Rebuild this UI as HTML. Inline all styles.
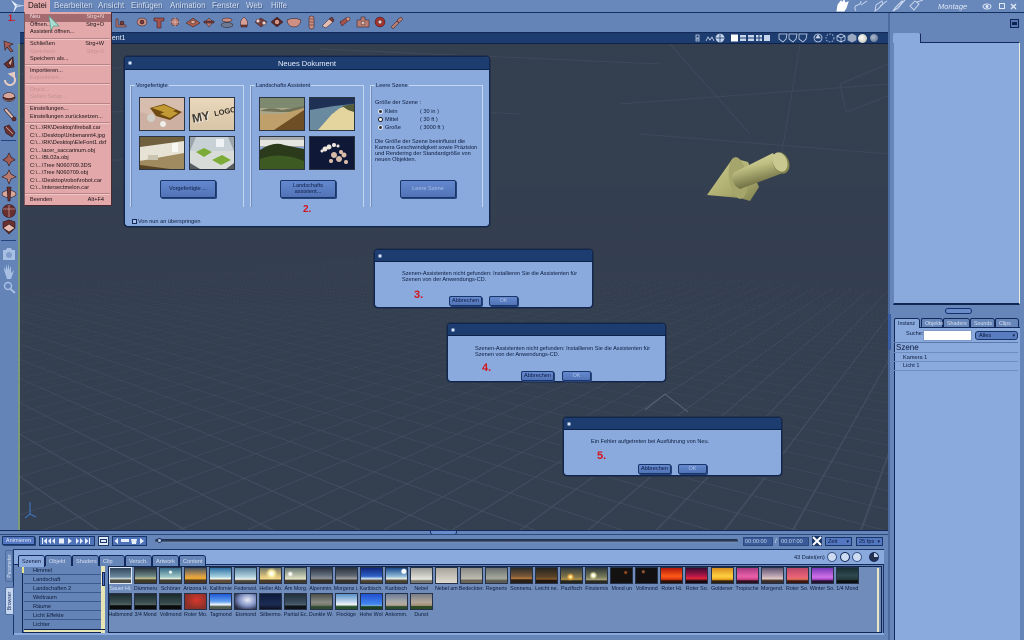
<!DOCTYPE html>
<html lang="de"><head><meta charset="utf-8"><title>Neues Dokument</title>
<style>
*{box-sizing:border-box}
html,body{margin:0;padding:0;width:1024px;height:640px;overflow:hidden;background:#6685b8;font-family:"Liberation Sans",sans-serif;color:#0b1a3a}
#r{position:absolute;left:0;top:0;width:1024px;height:640px;overflow:hidden;filter:blur(.3px)}
.a{position:absolute}
.t{position:absolute;white-space:nowrap;line-height:1}
.mb{font-size:8px;color:#d6e0f1;top:2px;text-shadow:1px 1px 0 rgba(20,40,80,.45)}
.mi{position:absolute;left:30px;font-size:5.6px;white-space:nowrap;line-height:7px;color:#1a1014}
.ms{position:absolute;right:920px;font-size:5.6px;line-height:7px;color:#1a1014}
.dis{color:#c48f92}
.sep{position:absolute;left:25px;width:85px;height:2px;background:#b98487;border-bottom:1px solid #f0c6c6}
.win{position:absolute;background:#8aaade;border:1px solid #10264f;border-radius:4px;box-shadow:0 0 0 1px #26334a}
.tb{position:absolute;left:0;right:0;top:0;height:12px;background:#1d3c70;border-radius:3px 3px 0 0;border-bottom:1px solid #0d2248}
.dot{position:absolute;left:3px;top:4px;width:4px;height:4px;border-radius:50%;background:#fff;border:1px solid #7f9cc8}
.grp{position:absolute;border:1px solid #c5d6f0;border-bottom:0;box-shadow:inset 1px 0 #6f8dbd}
.gl{position:absolute;left:4px;top:-3px;background:#8aaade;padding:0 1px;font-size:5.6px;line-height:6px;white-space:nowrap}
.th{position:absolute;width:46px;height:34px;border:1px solid #2a3444;overflow:hidden}
.th svg{display:block}
.btn{position:absolute;background:linear-gradient(#6488cf,#5273b6);border:1px solid #1a3568;border-radius:2px;color:#0d1d42;font-size:5.6px;text-align:center;display:flex;align-items:center;justify-content:center;line-height:6px;box-shadow:1px 1px 0 #27457d}
.off{color:#a9c1e8}
.num{position:absolute;color:#d4141c;font:bold 10px "Liberation Sans",sans-serif;line-height:1}
.txt{position:absolute;font-size:5.6px;line-height:6px;white-space:nowrap;color:#0b1a3a}
.tab{position:absolute;top:555px;height:11px;background:#6685b8;border:1px solid #12295a;border-bottom:0;border-radius:2px 3px 0 0;font-size:5.6px;color:#d6e0f1;padding:3px 0 0 3px;white-space:nowrap}
.sky{display:flex;position:absolute;left:109px}
.c{width:25.07px;flex:none;text-align:left}
.c i{display:block;width:23px;height:17px;border:1px solid #26314a}
.c b{display:block;font-weight:normal;font-size:5.3px;line-height:6px;margin-top:2px;width:25px;margin-left:-1px;text-align:center;white-space:nowrap;overflow:hidden;color:#0b1a3a}
.cat{position:absolute;left:24px;width:77px;height:9px;border-bottom:1px solid #3c5a8e;font-size:5.6px;padding:2px 0 0 9px;background:#6483b6;color:#0b1a3a}
.rt{position:absolute;top:318px;height:9px;background:#6685b8;border:1px solid #12295a;border-bottom:0;border-radius:2px 3px 0 0;font-size:5.3px;color:#d6e0f1;padding:2px 0 0 3px;white-space:nowrap}
.row{position:absolute;left:894px;width:124px;height:9px;border-bottom:1px solid #6f8dbd;font-size:5.6px;padding:2px 0 0 9px}
</style></head>
<body><div id="r">

<!-- Viewport -->
<div class="a" style="left:18px;top:44px;width:870px;height:486px;background:#343f50;overflow:hidden;border-left:2px solid #7d9a78">
  <div class="a" style="left:-1060px;top:-1100px;width:3000px;height:3000px;transform:perspective(620px) rotateX(68deg) rotateZ(38deg);background-image:linear-gradient(#465164 1px,transparent 1px),linear-gradient(90deg,#465164 1px,transparent 1px);background-size:40px 40px"></div>
  <div class="a" style="left:0;top:0;width:870px;height:260px;background:linear-gradient(#343f50 55%,rgba(52,63,80,0))"></div>
  <svg class="a" style="left:0;top:0" width="870" height="486" fill="none">
    <defs>
      <linearGradient id="cy" x1="0" y1="0" x2=".35" y2="1"><stop offset="0" stop-color="#dcdca6"/><stop offset=".45" stop-color="#c0c084"/><stop offset="1" stop-color="#66663c"/></linearGradient>
      <linearGradient id="co" x1="0" y1="0" x2="1" y2="1"><stop offset="0" stop-color="#cfcf92"/><stop offset=".6" stop-color="#abab6e"/><stop offset="1" stop-color="#80804e"/></linearGradient>
    </defs>
    <g stroke="#3f495b" stroke-width="1">
      <path d="M0 30L250 14M0 75L120 66M290 60L500 70M300 5L640 20M600 60L870 40M620 90L870 110M650 0L730 90M780 0L760 120M0 120L200 112"/>
      <path d="M820 40L868 20M820 40L826 68L868 52"/>
    </g>
    <path d="M625 366L645 350L668 368" stroke="#5a6577"/>
    <path d="M10 470V458M10 470L16 473M10 470L5 474" stroke="#3f78c8"/>
    <!-- 3D object -->
    <g transform="translate(-20,-44)">
      <path d="M707 195L733 158L748 162L759 187L750 201L740 198Z" fill="url(#co)"/>
      <ellipse cx="738" cy="178" rx="9" ry="21" transform="rotate(-8 738 178)" fill="#a6a66c"/>
      <path d="M733 173L773 153L783 173L740 189Q731 185 733 173Z" fill="url(#cy)"/>
      <ellipse cx="781" cy="163" rx="8" ry="11" transform="rotate(-22 781 163)" fill="#86864f"/>
      <ellipse cx="780" cy="162" rx="7" ry="10" transform="rotate(-22 780 162)" fill="#c8c890"/>
    </g>
  </svg>
</div>

<!-- chrome bars -->
<div class="a" style="left:0;top:0;width:1024px;height:13px;background:#6887ba;border-bottom:1px solid #14305f"></div>
<div class="a" style="left:0;top:13px;width:888px;height:20px;background:#6483b6"></div>
<div class="a" style="left:0;top:13px;width:18px;height:517px;background:#6483b6"></div>
<div class="a" style="left:20px;top:32px;width:868px;height:12px;background:#1d3c70;border-top:1px solid #12295a;border-bottom:1px solid #0e2148"></div>
<div class="t" style="left:106px;top:35px;font-size:7px;color:#e6eefa">ment1</div>

<!-- logo -->
<svg class="a" style="left:9px;top:0" width="17" height="13"><path d="M2 0L8 4.500L16 5.500L8 7L4 13L6 6.500Z" fill="#e9f0fa"/><path d="M6 6.500L16 5.500L8 5Z" fill="#9db4d8"/></svg>

<!-- menu bar -->
<div class="a" style="left:24px;top:0;width:26px;height:13px;background:#e3a9aa"></div>
<div class="t mb" style="left:28px;color:#1a1014;text-shadow:none">Datei</div>
<div class="t mb" style="left:54px">Bearbeiten</div>
<div class="t mb" style="left:98px">Ansicht</div>
<div class="t mb" style="left:131px">Einfügen</div>
<div class="t mb" style="left:170px">Animation</div>
<div class="t mb" style="left:212px">Fenster</div>
<div class="t mb" style="left:246px">Web</div>
<div class="t mb" style="left:271px">Hilfe</div>

<!-- top-right modes -->
<svg class="a" style="left:835px;top:0" width="90" height="12" fill="none" stroke="#c7d5ec" stroke-width="1">
  <path d="M2 11L3 5L6 1L7 3L9 0L10 3L13 2L11 8L9 11Z" fill="#fff" stroke="#fff"/>
  <path d="M21 11Q18 6 23 5Q26 4 26 1M26 5L32 1"/>
  <path d="M40 11L41 5L47 1L48 4L43 9ZM45 6L52 1"/>
  <path d="M58 11L61 7L67 1L68 2L63 8ZM66 4L70 0" stroke-width="1.3"/>
  <path d="M75 6L80 1L84 4L79 10ZM82 2L88 0"/>
</svg>
<div class="t" style="left:938px;top:2px;font:italic 7.5px 'Liberation Sans',sans-serif;color:#dfe8f6">Montage</div>
<svg class="a" style="left:982px;top:2px" width="38" height="9" fill="none" stroke="#dfe8f6">
  <ellipse cx="5" cy="4.5" rx="4" ry="2.5"/><circle cx="5" cy="4.5" r="1" fill="#fff"/>
  <rect x="17.5" y="1.5" width="5" height="5"/><path d="M29 2L34 7M34 2L29 7" stroke-width="1.4"/>
</svg>
<div class="num" style="left:8px;top:14px;font-size:9px">1.</div>

<!-- top toolbar icons -->
<svg class="a" style="left:110px;top:14px" width="300" height="17">
<g fill="#7a3d3c" stroke="#2e181b" stroke-width=".5">
  <path d="M8 5V11H16V13H6V5Z" fill="#b87c72"/><circle cx="12" cy="9" r="2" fill="#7a3d3c"/>
  <ellipse cx="32" cy="8" rx="5" ry="4" fill="#c88e82"/><circle cx="32" cy="8" r="2"/>
  <path d="M44 4H54V7H51V14H47V7H44Z" fill="#a4524c"/>
  <circle cx="65" cy="8" r="4" fill="#b87c72"/><path d="M60 8H70M65 3V13" stroke="#f0d8d0"/>
  <path d="M76 9L83 4L90 9L83 13Z" fill="#a9604f"/><path d="M80 8L83 6L86 8L83 10Z" fill="#e0aa9a"/>
  <path d="M99 4L103 8L99 13L95 8Z" fill="#b87c72"/><path d="M94 7H104V9H94Z"/>
  <ellipse cx="117" cy="6" rx="5" ry="2" fill="#c88e82"/><ellipse cx="117" cy="11" rx="6" ry="2.5" fill="#6a7a92"/>
  <path d="M131 12Q129 7 134 3Q139 7 137 12Z" fill="#d8a094"/><rect x="131" y="11" width="6" height="2" fill="#7a3d3c"/>
  <path d="M145 8L151 4L157 8L151 13Z"/><circle cx="148" cy="7" r="2" fill="#f0d0c8"/><circle cx="154" cy="9" r="2" fill="#f0d0c8"/>
  <path d="M161 8L167 3L173 8L167 13Z" fill="#5c2a2a"/><circle cx="167" cy="8" r="2.5" fill="#d89888"/>
  <path d="M177 6Q184 3 191 6Q190 13 184 13Q178 13 177 6Z" fill="#cf9084"/>
  <rect x="199" y="2" width="5" height="13" rx="2" fill="#c88e82"/><path d="M199 5H204M199 8H204M199 11H204" stroke="#4a2224"/>
  <path d="M212 12L219 5L223 8L216 14Z" fill="#e0bcb2"/><path d="M219 5L222 3L224 6L223 8Z"/>
  <path d="M230 8L236 4L238 7L232 12Z" fill="#a4524c"/><circle cx="238" cy="5" r="2" fill="#d89888"/>
  <path d="M247 13V6H251V3H255V6H259V13Z" fill="#b87c72"/><circle cx="253" cy="9" r="2" fill="#e0bcb2"/>
  <circle cx="270" cy="8" r="5" fill="#a5322e"/><circle cx="270" cy="8" r="2" fill="#f0d0c8"/>
  <path d="M281 13L287 7L289 9L283 15ZM287 6L291 3L293 5L289 9Z" fill="#b87c72"/>
</g></svg>

<!-- left toolbar icons -->
<svg class="a" style="left:0;top:38px" width="18" height="260">
<g stroke="#2e181b" stroke-width=".6" fill="#b87c72">
  <path d="M4 3L13 6L9 8L13 13L11 14L7 9L5 12Z" fill="#a35c54"/>
  <path d="M4 26L13 19L14 29L8 30Z" fill="#6a3030"/><path d="M8 25L13 19L11 28Z" fill="#d8a69a"/>
  <path d="M5 42A5 5 0 1 0 13 38L10 36L14 35V39" fill="none" stroke="#e8ccc4" stroke-width="2"/>
  <ellipse cx="9" cy="59" rx="6" ry="4.500" fill="#d8a69a"/><path d="M3 59Q9 66 15 59Q9 62 3 59Z" fill="#6a3030"/>
  <path d="M4 72L6 70L15 80L13 82Z" fill="#e0bcb2"/><circle cx="14" cy="81" r="2" fill="#6a3030"/>
  <path d="M4 89L9 87L15 95L12 99L6 95Z" fill="#6a3030"/><path d="M6 89L13 96" stroke="#e0bcb2" fill="none"/>
  <path d="M9 115L11 119L15 122L11 124L9 128L7 124L3 122L7 119Z" fill="#a35c54"/>
  <path d="M9 132L11 136L16 139L11 141L9 146L7 141L2 139L7 136Z" fill="#b87c72"/>
  <ellipse cx="9" cy="156" rx="7" ry="3.500" fill="#d8a69a"/><path d="M7 149H11L10 163H8Z" fill="#6a3030"/>
  <circle cx="9" cy="173" r="6.500" fill="#6a3030"/><path d="M3 171H15M9 167V179" stroke="#e0bcb2"/>
  <path d="M3 184L9 182L15 184V190L9 196L3 190Z" fill="#6a3030"/><path d="M3 190L9 186L15 190L9 194Z" fill="#e6baae"/>
</g>
<rect x="1" y="102" width="15" height="1" fill="#23457e"/><rect x="1" y="202" width="15" height="1" fill="#23457e"/>
<g fill="#a6bfe3">
  <path d="M3 212H6L7 210H11L12 212H15V222H3Z"/><circle cx="9" cy="217" r="3" fill="#7f9ccb"/>
  <path d="M4 232L5 228V233L7 226V232L9 226V232L11 228V235L14 232L11 241H7Z"/>
</g>
<circle cx="8" cy="248" r="3.500" fill="none" stroke="#a6bfe3" stroke-width="1.500"/><path d="M10.500 251L15 255" stroke="#a6bfe3" stroke-width="2"/>
</svg>

<!-- doc title icons -->
<svg class="a" style="left:690px;top:32px" width="196" height="12" fill="none" stroke="#c7d5ec" stroke-width=".8">
  <path d="M6 3H9V6H6ZM6 7H9V9H6Z"/><path d="M16 9L18 5L20 8L22 5L24 9"/>
  <circle cx="30" cy="6" r="4" fill="#c7d5ec"/><path d="M26 6H34M30 2V10" stroke="#1d3c70"/>
  <rect x="41" y="2.500" width="7" height="7" fill="#fff" stroke="none"/>
  <g fill="#c7d5ec" stroke="none"><rect x="50" y="3" width="6" height="2.500"/><rect x="50" y="6.500" width="6" height="2.500"/><rect x="58" y="3" width="6" height="2.500"/><rect x="58" y="6.500" width="6" height="2.500"/><rect x="66" y="3" width="2.500" height="2.500"/><rect x="69.500" y="3" width="2.500" height="2.500"/><rect x="66" y="6.500" width="2.500" height="2.500"/><rect x="69.500" y="6.500" width="2.500" height="2.500"/><rect x="74" y="3" width="6" height="6"/></g>
  <path d="M89 2H97L96 7L93 10L89 7Z M99 2H107L106 7L103 10L99 7Z M109 2H117L116 7L113 10L109 7Z"/>
  <circle cx="128" cy="6" r="4"/><path d="M128 3L130 6H126Z" fill="#c7d5ec"/>
  <circle cx="140" cy="6" r="4" stroke-dasharray="1.500 1.500"/>
  <path d="M151 2L155 4V8L151 10L147 8V4Z M147 4L151 6L155 4M151 6V10"/>
  <path d="M162 2L166 4V8L162 10L158 8V4Z" fill="#9aa9bf" stroke="#9aa9bf"/>
</svg>
<div class="a" style="left:858px;top:34px;width:9px;height:9px;border-radius:50%;background:radial-gradient(circle at 40% 40%,#fff,#b9b9a6)"></div>
<div class="a" style="left:870px;top:34px;width:8px;height:8px;border-radius:50%;background:radial-gradient(circle at 40% 40%,#aebccf,#55678a)"></div>

<!-- Right panel -->
<div class="a" style="left:888px;top:13px;width:136px;height:627px;background:#6685b8;border-left:2px solid #4e6b9d"></div>
<div class="a" style="left:1010px;top:19px;width:9px;height:9px;background:#5677b6;border:1px solid #0f2450"><div class="a" style="left:1px;top:2px;width:5px;height:3px;background:#0f2450"></div></div>
<div class="a" style="left:893px;top:42px;width:127px;height:263px;background:#8aaade;border-left:1px solid #6685b8;border-right:1px solid #e6ecd8;border-bottom:2px solid #10264f;border-top:1px solid #12295a"></div>
<div class="a" style="left:893px;top:33px;width:28px;height:10px;background:#8aaade;border-right:1px solid #12295a;border-radius:2px 2px 0 0"></div>
<div class="a" style="left:945px;top:308px;width:27px;height:6px;background:#6a8bca;border:1px solid #13306a;border-radius:3px"></div>
<div class="a" style="left:888px;top:314px;width:3px;height:36px;background:#3a5ea6"></div>

<div class="rt" style="left:894px;width:26px;background:#8aaade;color:#0b1a3a;height:10px;z-index:2">Instanz</div>
<div class="rt" style="left:921px;width:22px">Objekte</div>
<div class="rt" style="left:943px;width:27px">Shaders</div>
<div class="rt" style="left:970px;width:25px">Sounds</div>
<div class="rt" style="left:995px;width:24px">Clips</div>
<div class="a" style="left:894px;top:327px;width:126px;height:313px;background:#8aaade;border-left:1px solid #12295a;border-top:1px solid #12295a"></div>
<div class="t" style="left:906px;top:332px;font-size:5.6px">Suche:</div>
<div class="a" style="left:923px;top:330px;width:49px;height:11px;background:#fff;border:1px solid #7d9ac8"></div>
<div class="a" style="left:975px;top:331px;width:43px;height:9px;background:#5a7cc0;border:1px solid #1a3568;border-radius:3px;font-size:5.6px;padding:1px 0 0 3px;color:#0b1a3a">Alles<span style="position:absolute;right:2px;top:1px;font-size:5px">▾</span></div>
<div class="a" style="left:894px;top:342px;width:124px;height:1px;background:#5b79ab"></div>
<div class="t" style="left:896px;top:344px;font-size:8px">Szene</div>
<div class="row" style="top:352px;border-top:1px solid #6f8dbd;height:10px">Kamera 1</div>
<div class="row" style="top:361px;height:10px">Licht 1</div>

<!-- Bottom -->
<div class="a" style="left:0;top:530px;width:888px;height:110px;background:#6685b8;border-top:1px solid #12295a"></div>
<div class="a" style="left:430px;top:530px;width:27px;height:5px;background:#6a8bca;border:1px solid #13306a;border-radius:0 0 3px 3px"></div>
<div class="a" style="left:0;top:534px;width:888px;height:1px;background:#2c4a7d"></div>
<div class="btn" style="left:2px;top:536px;width:33px;height:9px;color:#e0e9f7;background:#5377c0;border-radius:1px">Animieren</div>
<svg class="a" style="left:39px;top:536px" width="110" height="10">
  <rect x=".5" y=".5" width="55" height="9" fill="#4f73b8" stroke="#1a3568"/>
  <g fill="#e6eefa">
    <path d="M3 2H4V8H3ZM8 2V8L4.500 5ZM12 2V8L9 5ZM16 2V8L13 5Z"/>
    <rect x="20" y="2.500" width="5" height="5"/>
    <path d="M29 2L33 5L29 8ZM37 2L40 5L37 8ZM41 2L44 5L41 8ZM46 2L49.500 5L46 8ZM50 2H51V8H50Z"/>
  </g>
  <rect x="59.500" y=".5" width="10" height="9" fill="#dfe8f6" stroke="#1a3568"/><rect x="61" y="3" width="7" height="4" fill="#1a3568"/><rect x="62" y="4" width="5" height="2" fill="#dfe8f6"/>
  <rect x="73.500" y=".5" width="34" height="9" fill="#4f73b8" stroke="#1a3568"/>
  <g fill="#e6eefa"><path d="M79 2V8L75.500 5Z"/><rect x="82" y="3" width="8" height="3"/><path d="M92 3H98L97 8H93Z"/><path d="M101 2L105 5L101 8Z"/></g>
</svg>
<div class="a" style="left:155px;top:539px;width:583px;height:4px;background:linear-gradient(#1f2c45,#2c3f62 50%,#8ea7cf);border-radius:2px"></div>
<div class="a" style="left:157px;top:538px;width:5px;height:5px;border-radius:50%;background:#b7c6dc;border:1px solid #1a3568"></div>
<div class="a" style="left:743px;top:537px;width:30px;height:9px;background:#385a98;border:1px solid #2c4a80;color:#c7d5ec;font-size:5.6px;padding:1px 0 0 1px">00:00:00</div>
<div class="t" style="left:775px;top:539px;font-size:6px;color:#dfe8f6">/</div>
<div class="a" style="left:779px;top:537px;width:30px;height:9px;background:#385a98;border:1px solid #2c4a80;color:#c7d5ec;font-size:5.6px;padding:1px 0 0 1px">00:07:00</div>
<svg class="a" style="left:812px;top:536px" width="10" height="10"><rect width="10" height="10" fill="#1a3568"/><path d="M1 1L9 9M9 1L1 9" stroke="#fff" stroke-width="2"/></svg>
<div class="a" style="left:825px;top:537px;width:27px;height:9px;background:#5377c0;border:1px solid #1a3568;font-size:5.6px;padding:1px 0 0 2px;color:#0b1a3a">Zeit<span style="position:absolute;right:2px;top:1px;font-size:5px">▾</span></div>
<div class="a" style="left:856px;top:537px;width:27px;height:9px;background:#5377c0;border:1px solid #1a3568;font-size:5.6px;padding:1px 0 0 2px;color:#0b1a3a">25 fps<span style="position:absolute;right:2px;top:1px;font-size:5px">▾</span></div>

<!-- browser panel -->
<div class="a" style="left:13px;top:549px;width:871px;height:86px;background:#6685b8;border:1px solid #1a3568"></div>
<div class="a" style="left:14px;top:550px;width:870px;height:15px;background:#8aaade;border-bottom:1px solid #12295a"></div>
<div class="a" style="left:14px;top:633px;width:870px;height:2px;background:#8aaade"></div>
<div class="a" style="left:5px;top:550px;width:8px;height:32px;background:#6685b8;border:1px solid #4e6b9d;border-radius:2px 0 0 2px;overflow:hidden"><div class="a" style="left:-12px;top:12px;width:32px;font-size:5px;color:#dfe8f6;transform:rotate(-90deg);text-align:center">Parameter</div></div>
<div class="a" style="left:5px;top:587px;width:9px;height:28px;background:#c5d6f0;border:1px solid #4e6b9d;border-radius:2px 0 0 2px;overflow:hidden"><div class="a" style="left:-10px;top:10px;width:28px;font-size:5px;color:#12295a;transform:rotate(-90deg);text-align:center">Browser</div></div>

<div class="tab" style="left:18px;width:27px;background:#8aaade;color:#0b1a3a;height:12px;z-index:2">Szenen</div>
<div class="tab" style="left:45px;width:27px">Objekt</div>
<div class="tab" style="left:72px;width:27px">Shaders</div>
<div class="tab" style="left:99px;width:26px">Clip</div>
<div class="tab" style="left:125px;width:27px">Versch.</div>
<div class="tab" style="left:152px;width:27px">Artwork</div>
<div class="tab" style="left:179px;width:27px">Content</div>
<div class="t" style="left:794px;top:556px;font-size:5.6px">43 Datei(en)</div>
<div class="a" style="left:827px;top:552px;width:10px;height:10px;border-radius:50%;background:#cddcf2;border:1px solid #3a5488"></div>
<div class="a" style="left:840px;top:552px;width:10px;height:10px;border-radius:50%;background:#cddcf2;border:1px solid #12295a"></div>
<div class="a" style="left:852px;top:552px;width:10px;height:10px;border-radius:50%;background:#cddcf2;border:1px solid #3a5488"></div>
<div class="a" style="left:869px;top:552px;width:10px;height:10px;border-radius:50%;background:conic-gradient(#c7d5ec 0 25%,#24324f 25% 100%);border:1px solid #12295a"></div>

<div class="a" style="left:22px;top:566px;width:83px;height:67px;background:#6483b6;border:1px solid #10264f;border-top:0"></div>
<div class="a" style="left:22px;top:566px;width:2px;height:7px;background:#e6e28a"></div>
<div class="a" style="left:101px;top:566px;width:4px;height:67px;background:#e8e6b4"></div>
<div class="a" style="left:102px;top:572px;width:3px;height:14px;background:#4f73c8;border:1px solid #12295a"></div>
<div class="cat" style="top:566px">Himmel</div>
<div class="cat" style="top:575px">Landschaft</div>
<div class="cat" style="top:584px">Landschaften 2</div>
<div class="cat" style="top:593px">Weltraum</div>
<div class="cat" style="top:602px">Räume</div>
<div class="cat" style="top:611px">Licht Effekte</div>
<div class="cat" style="top:620px;border-bottom:0">Lichter</div>
<div class="a" style="left:24px;top:629px;width:81px;height:3px;background:#e8e6b4;border-top:1px solid #10264f"></div>
<div class="a" style="left:108px;top:566px;width:774px;height:67px;background:#6f8cbb;border:1px solid #10264f"></div>
<div class="a" style="left:877px;top:568px;width:2px;height:64px;background:#e8e6c4"></div>

<!-- Sky row 1 -->
<div class="sky" style="top:567px">
<div class="c"><i style="background:linear-gradient(#31465c,#6d8aa0 60%,#d8e0dc 72%,#4e4f46 80%);border-color:#dfe8f6"></i><b style="color:#cfe0f6">Sauer Hi.</b></div>
<div class="c"><i style="background:linear-gradient(#25323c,#6f8886 55%,#c7c28f 70%,#3f3a28 80%)"></i><b>Dämmeru</b></div>
<div class="c"><i style="background:radial-gradient(circle at 50% 28%,#fff 0 1px,transparent 2px),linear-gradient(#386a88,#9fc8c8 60%,#ecf0e0 72%,#3f3e30 80%)"></i><b>Schöner</b></div>
<div class="c"><i style="background:linear-gradient(#47535e,#d19a4a 50%,#f4b030 70%,#4a3420 82%)"></i><b>Arizona H.</b></div>
<div class="c"><i style="background:linear-gradient(#2e6fa4,#a9d4e2 60%,#fafaf0 72%,#5d4b38 82%)"></i><b>Kalifornie</b></div>
<div class="c"><i style="background:linear-gradient(#5b84a0,#b4d6e2 60%,#f2f2ea 75%,#4a4436 84%)"></i><b>Federwol.</b></div>
<div class="c"><i style="background:radial-gradient(circle at 55% 38%,#fff 0 1px,#f7eba0 3px,transparent 6px),linear-gradient(#72786a,#e6c87c 60%,#f0d78c 72%,#4a3a28 82%)"></i><b>Heller Ab.</b></div>
<div class="c"><i style="background:radial-gradient(circle at 25% 40%,#fff 0 1px,transparent 3px),linear-gradient(#6c7a78,#d4d8bc 65%,#e8e4c8 74%,#3d3a2c 82%)"></i><b>Am Morg.</b></div>
<div class="c"><i style="background:linear-gradient(#2c3340,#5e6a78 45%,#8e9298 70%,#343028 82%)"></i><b>Alpenmin.</b></div>
<div class="c"><i style="background:linear-gradient(#2c3340,#5e6672 50%,#a0a0a0 72%,#33312a 82%)"></i><b>Morgens i.</b></div>
<div class="c"><i style="background:linear-gradient(#10267a,#2f62c8 55%,#cfe4f4 72%,#4a4030 84%)"></i><b>Karibisch.</b></div>
<div class="c"><i style="background:radial-gradient(circle at 85% 22%,#fff 0 2px,transparent 3px),linear-gradient(#1a4a8a,#8fb8d6 55%,#e8eee4 72%,#47402e 84%)"></i><b>Karibisch</b></div>
<div class="c"><i style="background:linear-gradient(#9b9c98,#d8d8d0 60%,#e8e8e0 75%,#77756a 85%)"></i><b>Nebel</b></div>
<div class="c"><i style="background:linear-gradient(#a8a49c,#d0ccc2 70%,#dcd8ce)"></i><b>Nebel am</b></div>
<div class="c"><i style="background:linear-gradient(#8b8a86,#c0beb2 75%,#6b6558 78%)"></i><b>Bedeckter.</b></div>
<div class="c"><i style="background:linear-gradient(#6a6e6e,#a8ac9e 70%,#5b5a50 85%)"></i><b>Regneris</b></div>
<div class="c"><i style="background:linear-gradient(#2c2c28,#7a5a3a 55%,#b87838 72%,#2a2018 78%)"></i><b>Sonnenu.</b></div>
<div class="c"><i style="background:linear-gradient(#26241e,#5c4428 60%,#8c5c2c 75%,#201810 80%)"></i><b>Leicht ne.</b></div>
<div class="c"><i style="background:radial-gradient(circle at 45% 60%,#fff0a0 0 1px,#e8a840 2px,transparent 4px),linear-gradient(#323c3c,#8a7c4c 65%,#b89848 75%,#26261c 86%)"></i><b>Pazifisch</b></div>
<div class="c"><i style="background:radial-gradient(circle at 35% 50%,#fff 0 1px,#e8e4a8 2px,transparent 4px),linear-gradient(#2e3638,#7a7c5c 60%,#a8a27c 78%,#2a2a20 86%)"></i><b>Finsternis</b></div>
<div class="c"><i style="background:radial-gradient(circle at 70% 30%,#9a4a20 0 1px,transparent 2px),#141210"></i><b>Mond un</b></div>
<div class="c"><i style="background:radial-gradient(circle at 35% 25%,#9a5a30 0 1px,transparent 2px),#121010"></i><b>Vollmond</b></div>
<div class="c"><i style="background:linear-gradient(#b01808,#ff5a18 55%,#e03810 75%,#2a1008 86%)"></i><b>Roter Hi.</b></div>
<div class="c"><i style="background:linear-gradient(#3a0a30,#b81848 55%,#e82a3a 70%,#1a0810 86%)"></i><b>Roter So.</b></div>
<div class="c"><i style="background:linear-gradient(#d88c20,#ffd040 55%,#f4a820 76%,#30200c 86%)"></i><b>Goldener</b></div>
<div class="c"><i style="background:linear-gradient(#a83a80,#e860a8 55%,#d84890 75%,#301020 86%)"></i><b>Tropische</b></div>
<div class="c"><i style="background:linear-gradient(#605470,#b8a0b0 50%,#e0c8c0 72%,#3a2c28 84%)"></i><b>Morgend.</b></div>
<div class="c"><i style="background:linear-gradient(#b84868,#e86078 55%,#e87060 75%,#3a1810 86%)"></i><b>Roter So.</b></div>
<div class="c"><i style="background:linear-gradient(#7838b8,#d070e8 60%,#b050d0 75%,#281030 86%)"></i><b>Winter So.</b></div>
<div class="c"><i style="background:linear-gradient(#182c30,#2e4a50 50%,#223838 78%,#0c1010 84%)"></i><b>1/4 Mond</b></div>
</div>

<!-- Sky row 2 -->
<div class="sky" style="top:593px">
<div class="c"><i style="background:linear-gradient(#1c2a30,#3e5254 60%,#5a6a68 70%,#0a0c0c 78%)"></i><b>Halbmond</b></div>
<div class="c"><i style="background:linear-gradient(#1c2a30,#3e5254 60%,#5a6a68 70%,#0a0c0c 78%)"></i><b>3/4 Mond</b></div>
<div class="c"><i style="background:linear-gradient(#1a2a2c,#364a4c 60%,#506060 70%,#0a0c0c 78%)"></i><b>Vollmond</b></div>
<div class="c"><i style="background:radial-gradient(ellipse at 55% 40%,#d8382c,#8a3028 70%),linear-gradient(#333,#111)"></i><b>Roter Mo.</b></div>
<div class="c"><i style="background:linear-gradient(#2058d8,#60a0f0 50%,#f4f8fc 72%,#505c50 84%)"></i><b>Tagmond</b></div>
<div class="c"><i style="background:radial-gradient(ellipse at 60% 40%,#e8ecf8,#7c8cc0 50%,#262a40 85%),#222"></i><b>Eismond</b></div>
<div class="c"><i style="background:linear-gradient(#0c1a3c,#1c2c54 70%,#0c1020)"></i><b>Silbermo.</b></div>
<div class="c"><i style="background:linear-gradient(#22303a,#3c5060 60%,#506070 72%,#0e1418 80%)"></i><b>Partial Ec.</b></div>
<div class="c"><i style="background:linear-gradient(#4a4e4a,#8a8c84 55%,#74786c 75%,#2e4a30 84%)"></i><b>Dunkle W.</b></div>
<div class="c"><i style="background:linear-gradient(#5a90c8,#c8dcf0 55%,#f2f4f4 72%,#24502c 84%)"></i><b>Flockige</b></div>
<div class="c"><i style="background:linear-gradient(#2050d0,#4488f0 70%,#8abcf4 76%,#184020 84%)"></i><b>Hohe Wol</b></div>
<div class="c"><i style="background:linear-gradient(#6c7c98,#a8a8a8 50%,#b8a898 75%,#2a4a2c 84%)"></i><b>Ankomm.</b></div>
<div class="c"><i style="background:linear-gradient(#7a7c88,#b4a898 55%,#a08c74 78%,#2c4a24 82%)"></i><b>Dunst</b></div>
</div>

<!-- Neues Dokument -->
<div class="win" style="left:124px;top:56px;width:366px;height:171px">
  <div class="tb" style="height:13px"><div class="dot"></div></div>
  <div class="t" style="left:0;right:0;top:3px;text-align:center;font-size:7.5px;color:#e6eefa">Neues Dokument</div>
</div>
<div class="grp" style="left:130px;top:85px;width:114px;height:122px"><div class="gl">Vorgefertigte</div></div>
<div class="grp" style="left:250px;top:85px;width:114px;height:122px"><div class="gl">Landschafts Assistent</div></div>
<div class="grp" style="left:370px;top:85px;width:113px;height:122px"><div class="gl">Leere Szene</div></div>

<div class="th" style="left:139px;top:97px"><svg width="44" height="32"><rect width="44" height="32" fill="#cdb0a2"/><path d="M0 0H44V12L30 22L0 14Z" fill="#d6bdae"/><path d="M10 10L24 6L42 14L30 22L16 18Z" fill="#6e4a12"/><path d="M12 10L24 7L36 12L26 15ZM20 16L30 12L38 15L30 20Z" fill="#c29a34"/><circle cx="11" cy="20" r="4" fill="#cfcfc8"/><circle cx="23" cy="26" r="3" fill="#eeeeea"/></svg></div>
<div class="th" style="left:189px;top:97px;background:linear-gradient(#ead8bc,#d8c4a6)"><div class="t" style="left:2px;top:12px;font:bold 12px 'Liberation Sans',sans-serif;color:#3e3a34;letter-spacing:-.3px;transform:rotate(-12deg);text-shadow:1px 1px #efeadf">MY</div><div class="t" style="left:24px;top:9px;font:bold 7.5px 'Liberation Sans',sans-serif;color:#2e2a24;transform:rotate(-12deg)">LOGO</div></div>
<div class="th" style="left:139px;top:136px"><svg width="44" height="32"><rect width="44" height="32" fill="#70603e"/><path d="M0 10L44 4V18L0 24Z" fill="#e6e2d4"/><path d="M0 24L44 16V32H0Z" fill="#a08a60"/><rect x="32" y="6" width="6" height="9" fill="#f8f8f4"/><path d="M8 18H18V23H8Z" fill="#c8c4b0"/><path d="M0 28L30 32H0Z" fill="#5a4426"/></svg></div>
<div class="th" style="left:189px;top:136px"><svg width="44" height="32"><rect width="44" height="32" fill="#9aa6ac"/><path d="M6 0H38L44 14H0Z" fill="#c8d2d6"/><path d="M0 14H44V32H0Z" fill="#d8dcd8"/><rect x="26" y="2" width="8" height="8" fill="#eef2f4"/><path d="M6 15L14 11L22 15L14 20Z" fill="#7cac38"/><path d="M22 23L32 18L41 23L31 28Z" fill="#7cac38"/><path d="M0 26L10 32H0ZM44 26L36 32H44Z" fill="#565e60"/></svg></div>
<div class="th" style="left:259px;top:97px"><svg width="44" height="32"><rect width="44" height="32" fill="#aba788"/><rect width="44" height="10" fill="#7e8a70"/><path d="M0 13Q10 8 22 12L44 8V14L20 14Z" fill="#6f7258"/><path d="M0 16H22L44 10V32H0Z" fill="#bfa06a"/><path d="M14 32L44 12V32Z" fill="#6e4e24"/></svg></div>
<div class="th" style="left:309px;top:97px"><svg width="44" height="32"><rect width="44" height="32" fill="#2a4268"/><path d="M0 0H44V5L20 9L0 12Z" fill="#1e3054"/><path d="M0 12L24 8L44 6V14L24 14L10 32H0Z" fill="#6a8aa0"/><path d="M30 10L44 6V32H8L22 16Z" fill="#e4d49e"/><path d="M32 8L44 6V14L38 12Z" fill="#545c38"/></svg></div>
<div class="th" style="left:259px;top:136px"><svg width="44" height="32"><rect width="44" height="10" fill="#a8acae"/><rect y="3" width="44" height="6" fill="#e6e6e0"/><path d="M0 13Q14 4 24 8Q34 10 44 12V32H0Z" fill="#2c3a1c"/><path d="M0 22Q20 14 44 24V32H0Z" fill="#3c5a22"/></svg></div>
<div class="th" style="left:309px;top:136px"><svg width="44" height="32"><rect width="44" height="32" fill="#101838"/><g fill="#efe6de"><circle cx="15" cy="12" r="2.500"/><circle cx="19" cy="10" r="2.500"/><circle cx="24" cy="8" r="2"/><circle cx="12" cy="14" r="1.500"/><circle cx="28" cy="9" r="1.500"/></g><g fill="#d8bcaa"><circle cx="24" cy="18" r="3"/><circle cx="29" cy="22" r="3"/><circle cx="34" cy="18" r="2.500"/><circle cx="21" cy="24" r="2"/><circle cx="36" cy="25" r="2"/><circle cx="31" cy="15" r="2"/></g></svg></div>

<div class="btn" style="left:160px;top:180px;width:56px;height:18px">Vorgefertigte ...</div>
<div class="btn" style="left:280px;top:180px;width:56px;height:18px">Landschafts<br>assistent...</div>
<div class="btn off" style="left:400px;top:180px;width:56px;height:18px">Leere Szene</div>
<div class="num" style="left:303px;top:205px">2.</div>

<div class="txt" style="left:375px;top:100px">Größe der Szene :</div>
<div class="a" style="left:378px;top:109px;width:5px;height:5px;border-radius:50%;background:#333;border:1px solid #dfe8f6"></div>
<div class="a" style="left:378px;top:117px;width:5px;height:5px;border-radius:50%;background:#fff;border:1px solid #222"></div>
<div class="a" style="left:378px;top:125px;width:5px;height:5px;border-radius:50%;background:#333;border:1px solid #dfe8f6"></div>
<div class="txt" style="left:385px;top:109px">Klein</div><div class="txt" style="left:420px;top:109px">( 30 in )</div>
<div class="txt" style="left:385px;top:117px">Mittel</div><div class="txt" style="left:420px;top:117px">( 30 ft )</div>
<div class="txt" style="left:385px;top:125px">Große</div><div class="txt" style="left:420px;top:125px">( 3000 ft )</div>
<div class="txt" style="left:375px;top:139px">Die Größe der Szene beeinflusst die<br>Kamera Geschwindigkeit sowie Präzision<br>und Rendering der Standardgröße von<br>neuen Objekten.</div>
<div class="a" style="left:132px;top:219px;width:5px;height:5px;border:1px solid #12295a;background:#a8c0e8"></div>
<div class="txt" style="left:138px;top:219px">Von nun an überspringen</div>

<!-- Dialog 3 -->
<div class="win" style="left:374px;top:249px;width:219px;height:59px"><div class="tb"><div class="dot"></div></div></div>
<div class="txt" style="left:402px;top:271px">Szenen-Assistenten nicht gefunden: Installieren Sie die Assistenten für<br>Szenen von der Anwendungs-CD.</div>
<div class="num" style="left:414px;top:290px;font-size:11px">3.</div>
<div class="btn" style="left:449px;top:296px;width:33px;height:10px">Abbrechen</div>
<div class="btn off" style="left:489px;top:296px;width:29px;height:10px">OK</div>

<!-- Dialog 4 -->
<div class="win" style="left:447px;top:323px;width:219px;height:59px"><div class="tb"><div class="dot"></div></div></div>
<div class="txt" style="left:475px;top:346px">Szenen-Assistenten nicht gefunden: Installieren Sie die Assistenten für<br>Szenen von der Anwendungs-CD.</div>
<div class="num" style="left:482px;top:363px;font-size:11px">4.</div>
<div class="btn" style="left:521px;top:371px;width:33px;height:10px">Abbrechen</div>
<div class="btn off" style="left:562px;top:371px;width:29px;height:10px">OK</div>

<!-- Dialog 5 -->
<div class="win" style="left:563px;top:417px;width:219px;height:59px"><div class="tb"><div class="dot"></div></div></div>
<div class="txt" style="left:591px;top:439px">Ein Fehler aufgetreten bei Ausführung von Neu.</div>
<div class="num" style="left:597px;top:451px;font-size:11px">5.</div>
<div class="btn" style="left:638px;top:464px;width:33px;height:10px">Abbrechen</div>
<div class="btn off" style="left:678px;top:464px;width:29px;height:10px">OK</div>

<!-- File menu -->
<div class="a" style="left:24px;top:12px;width:88px;height:194px;background:#e3a9aa;border:1px solid #4a2a30;border-top:0;border-left-color:#7d5a60"></div>
<div class="a" style="left:25px;top:14px;width:86px;height:8px;background:#a36b70"></div>
<div class="mi" style="top:14px;color:#f4e4e4">Neu</div><div class="ms" style="top:14px;color:#f0d8d8">Strg+N</div>
<div class="mi" style="top:22px">Öffnen...</div><div class="ms" style="top:22px">Strg+O</div>
<div class="mi" style="top:29px">Assistent öffnen...</div>
<div class="sep" style="top:38px"></div>
<div class="mi" style="top:41px">Schließen</div><div class="ms" style="top:41px">Strg+W</div>
<div class="mi dis" style="top:49px">Speichern</div><div class="ms dis" style="top:49px">Strg+S</div>
<div class="mi" style="top:56px">Speichern als...</div>
<div class="sep" style="top:64px"></div>
<div class="mi" style="top:68px">Importieren...</div>
<div class="mi dis" style="top:75px">Exportieren...</div>
<div class="sep" style="top:83px"></div>
<div class="mi dis" style="top:87px">Druck...</div>
<div class="mi dis" style="top:94px">Seiten Setup...</div>
<div class="sep" style="top:103px"></div>
<div class="mi" style="top:106px">Einstellungen...</div>
<div class="mi" style="top:114px">Einstellungen zurücksetzen...</div>
<div class="sep" style="top:122px"></div>
<div class="mi" style="top:125px">C:\...\RK\Desktop\fireball.car</div>
<div class="mi" style="top:133px">C:\...\Desktop\Unbenannt4.jpg</div>
<div class="mi" style="top:140px">C:\...\RK\Desktop\EleFont1.dxf</div>
<div class="mi" style="top:148px">C:\...\acer_saccarinum.obj</div>
<div class="mi" style="top:155px">C:\...\BL02a.obj</div>
<div class="mi" style="top:163px">C:\...\Tree N060709.3DS</div>
<div class="mi" style="top:170px">C:\...\Tree N060709.obj</div>
<div class="mi" style="top:178px">C:\...\Desktop\robot\robot.car</div>
<div class="mi" style="top:185px">C:\...\intersectmelon.car</div>
<div class="sep" style="top:193px"></div>
<div class="mi" style="top:197px">Beenden</div><div class="ms" style="top:197px">Alt+F4</div>
<!-- cursor -->
<svg class="a" style="left:48px;top:15px" width="13" height="16"><path d="M1 1L3 15L5.500 11L11 11Z" fill="#a8ddd0" stroke="#5d9c8e" stroke-width=".7"/></svg>

</div></body></html>
